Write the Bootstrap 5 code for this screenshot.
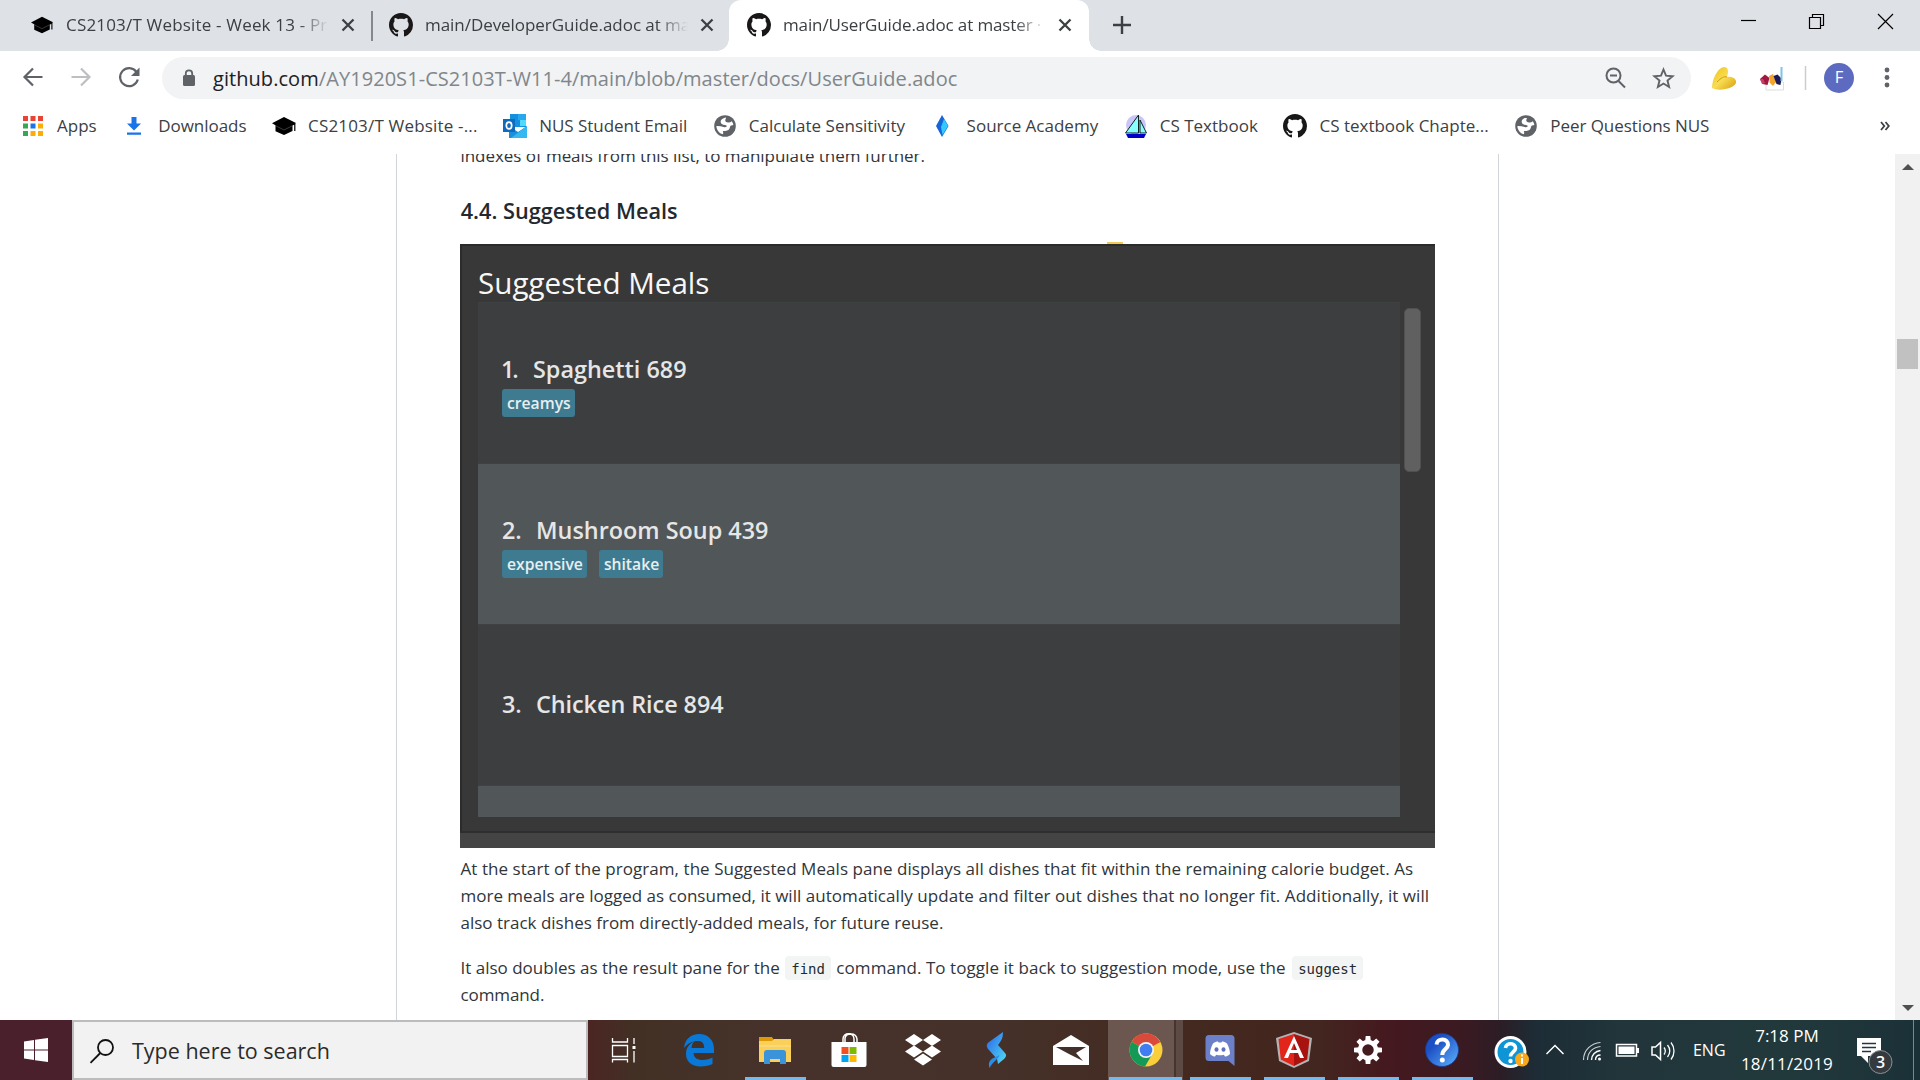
<!DOCTYPE html>
<html lang="en">
<head>
<meta charset="utf-8">
<title>main/UserGuide.adoc at master</title>
<link href="https://cdn.jsdelivr.net/npm/bootstrap@5.3.0/dist/css/bootstrap.min.css" rel="stylesheet">
<style>
body{width:1920px;height:1080px;overflow:hidden;font-family:"Open Sans","Noto Sans",sans-serif;font-size:17px;color:#3c4043;background:#fff}
svg{display:block;flex:none}
.fit{white-space:nowrap;flex:none}
.wide-1{letter-spacing:.06px}.wide-2{letter-spacing:.18px}
.tight-1{letter-spacing:-.05px}.tight-2{letter-spacing:-.12px}.tight-3{letter-spacing:-.1px}

/* tab strip */
.strip{height:51px;background:#dee1e6}
.tabitem{height:51px;padding-bottom:3px;padding-top:1px}
.t1{width:371px;padding-left:30px}
.t2{width:356px;padding-left:16px}
.t3{width:360px;padding-left:18px;background:#fff;border-radius:12px 12px 0 0;position:relative}
.t3:before,.t3:after{content:"";position:absolute;bottom:0;width:12px;height:12px}
.t3:before{left:-12px;background:radial-gradient(circle at 0 0,transparent 11.5px,#fff 12px)}
.t3:after{right:-12px;background:radial-gradient(circle at 100% 0,transparent 11.5px,#fff 12px)}
.tabname{width:263px;margin-left:12px;overflow:hidden;white-space:nowrap;-webkit-mask-image:linear-gradient(90deg,#000 88%,transparent 100%);mask-image:linear-gradient(90deg,#000 88%,transparent 100%)}
.tabclose{margin-left:12px}
.tabsep{width:2px;height:30px;margin-top:11px;background:#85888c}

/* address bar */
.toolbar{height:53px}
.omni{width:1529px;height:42px;margin-left:20px;border-radius:21px;background:#f1f3f4;padding-left:20px}
.url{font-size:20px;color:#80868b;margin-left:17px;padding-top:2px}
.url b{font-weight:400;color:#202124}
.avatar{width:30px;height:30px;background:#5c6bc0;font-size:16.5px;color:#fff}

/* bookmarks */
.marks{height:50px;padding:0 30px 6px 21px;gap:25.6px}
.marks>div{gap:12px}
.marks>div:not(:first-child){position:relative}

/* page */
.viewport{height:866px}
.scroller{width:25px;background:#f1f1f1;padding:10px 2px 9px}
.arrow-up,.arrow-down{border:6px solid transparent;width:0;height:0}
.arrow-up{border-bottom-color:#505050;border-top:0}
.arrow-down{border-top-color:#505050;border-bottom:0}
.thumb{width:21px;height:30px;background:#c1c1c1;margin-top:169px}
.doc{width:1103px;height:866px;margin-left:396px;border:solid #d1d5da;border-width:0 1px;padding:0 63px;color:#24292e;overflow:hidden}
.doc p{line-height:27px;margin-bottom:18px;color:#30353a;padding-left:.5px;white-space:nowrap}
.doc .cutline{margin:-12px 0 0}
.doc h3{font-size:21.7px;font-weight:600;line-height:28px;margin:28px 0 0;padding-left:.7px}
.shot{position:relative;width:975px;height:604px;margin-top:19px;background:#383838;border:solid #2b2b2b;border-width:2px 0 0 2px}
.crumb{position:absolute;left:645px;top:-4px;width:16px;height:2px;background:#f3c85a}
.shothead{height:56px;padding:15px 0 0 16px;font-size:29.6px;line-height:44px;color:#f7f7f7}
.meals{width:922px;margin-left:16px;height:515px;overflow:hidden}
.meal{height:161px;padding:50px 0 0 24px;background:#3c3e3f;font-size:23.4px;font-weight:600;color:#e6e6e6}
.meal.alt{background:#515658}
.meal{border-top:1px solid #3f4243}
.meal.plain{padding-top:63px}
.mealname{height:32px;line-height:32px}
.num{width:34px}
.num.first{width:31px;letter-spacing:-2px;text-indent:-1px}
.tags{gap:12px;margin-top:4px}
.taglab{height:28px;line-height:28.5px;background:#3e7b91;border-radius:3px;font-size:15.7px;padding:0 4px 0 5px;color:#e8eef0}
.shotbar{width:17px;height:164px;margin:6px 0 0 4px;border-radius:5px;background:#606060;border:1px solid #505050}
.shotfoot{height:17px;background:#444;border-top:2px solid #2e2e2e;margin-left:-2px}
.doc .after{margin-top:7px}
.cmd{display:inline-block;font:14px/24px "DejaVu Sans Mono",monospace;background:#f3f4f4;border-radius:4px;height:24px;padding:1px 6px 0;color:#24292e;margin:0 1px;vertical-align:0}
.cmd.long{margin-left:2px}

/* taskbar */
.taskbar{height:60px;background:linear-gradient(90deg,#4a202d 0,#4a202d 72px,#4b2522 588px,#423025 635px,#46322a 780px,#453129 1000px,#43291f 1190px,#43261f 1320px,#45191f 1385px,#3a1a22 1465px,#2c1d25 1500px,#1d2c36 1535px,#21353a 1620px,#22393c 1780px,#1b3138 1920px)}
.startbtn{width:72px}
.find{width:516px;background:#f2f2f2;border:2px solid #bcbcbc;padding:3px 0 0 15px;font-size:21.5px;color:#2b2b2b;gap:17px}
.app{width:74.1px;height:60px;position:relative}
.app.first{width:72px}
.app.edge{width:78px}
.app.run:after{content:"";position:absolute;left:7px;right:6px;bottom:0;height:3px;background:#76b9ed}
.app.on{background:linear-gradient(90deg,#6b5650 66px,#45352f 66px,#45352f 68px,#5e4a44 68px)}
.app.run.on:after{left:1px;right:1px}
.sys{color:#fff;font-size:17px}
.lang{font-size:16px;margin-left:12px;width:48px}
.clock{width:92px;line-height:28px}
.noti{margin-left:24px}
.peek{width:1px;background:#7c888c;margin-left:auto;margin-right:6px}
</style>
</head>
<body class="d-flex flex-column">
<svg width="0" height="0" style="display:none">
<symbol id="gh" viewBox="0 0 16 16"><path fill="#191717" d="M8 0C3.58 0 0 3.58 0 8c0 3.54 2.29 6.53 5.47 7.59.4.07.55-.17.55-.38 0-.19-.01-.82-.01-1.49-2.01.37-2.53-.49-2.69-.94-.09-.23-.48-.94-.82-1.13-.28-.15-.68-.52-.01-.53.63-.01 1.08.58 1.23.82.72 1.21 1.87.87 2.33.66.07-.52.28-.87.51-1.07-1.78-.2-3.64-.89-3.64-3.95 0-.87.31-1.59.82-2.15-.08-.2-.36-1.02.08-2.12 0 0 .67-.21 2.2.82.64-.18 1.32-.27 2-.27s1.36.09 2 .27c1.53-1.04 2.2-.82 2.2-.82.44 1.1.16 1.92.08 2.12.51.56.82 1.27.82 2.15 0 3.07-1.87 3.75-3.65 3.95.29.25.54.73.54 1.48 0 1.07-.01 1.93-.01 2.2 0 .21.15.46.55.38A8.01 8.01 0 0 0 16 8c0-4.42-3.58-8-8-8z"/></symbol>
<symbol id="cap" viewBox="0 0 24 24"><path d="M12 3 0 9.300l3.500 1.900v6L12 21l8.500-4v-5.400l1.700-.9V17h1.200V9.600L24 9z"/><path d="M3.500 11.700 12 16l8.500-4.300" fill="none" stroke="#777" stroke-width=".5"/></symbol>
<symbol id="cx" viewBox="0 0 14 14"><path d="M1.500 1.500l11 11M12.500 1.500l-11 11" stroke="#3c4043" stroke-width="2.300"/></symbol>
<symbol id="globe" viewBox="0 0 24 24"><circle cx="12" cy="12" r="10.800" fill="#5f6368"/><path fill="#fff" d="M13 3.400C9.500 4 7.300 6 7.700 8.200c.4 1.900 2.200 2.500 4.200 2.700 1.600.2 2.100.8 1.700 1.600-.5.800-1.800.8-3.100.5C8.300 12.400 6 11.800 3.400 12c.1 4 2.700 7.300 6.400 8.300.7-1.200.5-2.200 0-3.300 2.900.1 5.400-.3 6.600-2.300.8-1.400.4-2.700 1.700-3.300l2.300-.5c-.2-1.400-.8-2.600-1.600-3.600-1.300 1.100-3 1.400-4.700 1-1.400-.4-1.900-1.100-1.800-2.100.1-1.100.7-1.700.7-2.800z"/></symbol>
</svg>

<div class="strip d-flex">
  <div class="tabitem t1 d-flex align-items-center"><svg width="24" height="22"><use href="#cap"/></svg><div class="tabname"><span class="fit wide-2">CS2103/T Website - Week 13 - Pr</span></div><svg class="tabclose" width="14" height="14"><use href="#cx"/></svg></div>
  <div class="tabsep"></div>
  <div class="tabitem t2 d-flex align-items-center"><svg width="24" height="24"><use href="#gh"/></svg><div class="tabname"><span class="fit tight-1">main/DeveloperGuide.adoc at ma</span></div><svg class="tabclose" width="14" height="14"><use href="#cx"/></svg></div>
  <div class="tabitem t3 d-flex align-items-center"><svg width="24" height="24"><use href="#gh"/></svg><div class="tabname"><span class="fit tight-2">main/UserGuide.adoc at master ·</span></div><svg class="tabclose" width="14" height="14"><use href="#cx"/></svg></div>
  <svg width="831" height="51" viewBox="1089 0 831 51" fill="none" stroke="#3c4043"><path d="M1113 25h18M1122 16v18" stroke-width="2.400"/><g stroke="#000" stroke-width="1.200"><path d="M1741 20.500h15"/><path d="M1809.500 17.500h11v11h-11zM1812.500 17v-2.500h11v11h-3"/><path d="M1878 14l15 15M1893 14l-15 15"/></g></svg>
</div>

<div class="toolbar d-flex align-items-center">
  <svg width="142" height="53" viewBox="0 51 142 53" fill="none" stroke="#5f6368" stroke-width="2.200"><path d="M42.500 77H24.500M33 68.500L24.500 77l8.500 8.500"/><path stroke="#bdc0c3" d="M71.500 77h18M81 68.500l8.500 8.500-8.500 8.500"/><path d="M136.500 72a9 9 0 1 0 1.300 7.500"/><path fill="#5f6368" stroke="none" d="M139.500 67.500V76H131z"/></svg>
  <div class="omni d-flex align-items-center">
    <svg width="14" height="18" viewBox="0 0 14 18"><rect x="1" y="6" width="12" height="11" rx="1.500" fill="#5f6368"/><path d="M3.800 7V4.500a3.200 3.200 0 0 1 6.400 0V7" fill="none" stroke="#5f6368" stroke-width="1.800"/></svg>
    <div class="url flex-grow-1"><span class="fit wide-1"><b>github.com</b>/AY1920S1-CS2103T-W11-4/main/blob/master/docs/UserGuide.adoc</span></div>
    <svg width="96" height="42" viewBox="1595 57 96 42" fill="none" stroke="#5f6368" stroke-width="2"><circle cx="1613.500" cy="75.500" r="7"/><path d="M1610 75.500h7M1618.500 81l6.500 6.500"/><path stroke-width="1.900" d="M1663.500 69.500l2.500 6.200 6.600.5-5.100 4.300 1.600 6.500-5.600-3.500-5.600 3.500 1.600-6.500-5.100-4.300 6.600-.5z"/></svg>
  </div>
  <svg width="133" height="53" viewBox="1691 51 133 53"><defs><linearGradient id="gd" x1="0" y1="0" x2="1" y2="1"><stop offset="0" stop-color="#f0c419"/><stop offset=".5" stop-color="#f8dc55"/><stop offset="1" stop-color="#d79f08"/></linearGradient></defs><path fill="url(#gd)" d="M1712 88c0-8 5-20 12-21 4 0 5 4 3 10 5-1 10 2 9 6-2 5-16 9-24 5z"/><path d="M1717 82c4-4 7-6 10-5" stroke="#d09c0c" fill="none"/><path fill="#fff" stroke="#ddd" d="M1766 82h17.500v8H1766z"/><path fill="#a3163f" d="M1760 79l5-4.500 4.500 3.500-2 7-5-1z"/><path fill="#c9406a" d="M1760 79l3 0 2 4-3 1z"/><path fill="#f0a62c" d="M1769 76l4-2 3 8-3 4-3-3z"/><path fill="#1d1a55" d="M1773.500 76l4-1.500 4 4-1 6.500-4-1z"/><path stroke="#7cc4e8" stroke-width="2" d="M1781.500 67v14"/><path stroke="#ccc" stroke-width="1.500" d="M1805.500 66v24"/></svg>
  <div class="avatar rounded-circle d-flex align-items-center justify-content-center">F</div>
  <svg class="ms-auto" width="66" height="53" viewBox="1854 51 66 53" fill="#5f6368"><circle cx="1887" cy="70" r="2.400"/><circle cx="1887" cy="77.500" r="2.400"/><circle cx="1887" cy="85" r="2.400"/></svg>
</div>

<div class="marks d-flex align-items-center">
  <div class="d-flex align-items-center"><svg width="24" height="24" viewBox="21 113 24 24"><path fill="#ea4335" d="M23 115h5v5h-5zM30.500 115h5v5h-5zM38 115h5v5h-5z"/><path fill="#34a853" d="M23 122.500h5v5h-5zM23 130h5v5h-5z"/><path fill="#1a73e8" d="M30.500 122.500h5v5h-5z"/><path fill="#fbad05" d="M38 122.500h5v5h-5zM30.500 130h5v5h-5zM38 130h5v5h-5z"/></svg><span class="fit">Apps</span></div>
  <div class="d-flex align-items-center"><svg width="24" height="24" viewBox="0 0 24 24"><path fill="#1a73e8" d="M9.500 3h5v6.500h4.500l-7 7-7-7h4.500zM5 18.500h14v2.300H5z"/></svg><span class="fit tight-1">Downloads</span></div>
  <div class="d-flex align-items-center"><svg width="24" height="24"><use href="#cap"/></svg><span class="fit wide-2">CS2103/T Website -...</span></div>
  <div class="d-flex align-items-center"><svg width="24" height="24" viewBox="0 0 24 24"><path fill="#1490df" d="M7 0h16v13H7z"/><path fill="#0a5ea8" d="M7 6h5v7H7z"/><path fill="#28a8ea" d="M15 0h8v6h-8z"/><path fill="#50d9ff" d="M17 6h6v6h-6z"/><path fill="#1a8fdc" d="M6 12l9 6 9-6v12H6z"/><path fill="#35b8f1" d="M24 12v12H8z"/><path fill="#0f6cbd" d="M0 5h12v13H0z"/><ellipse cx="6" cy="11.500" rx="2.700" ry="3.400" fill="none" stroke="#fff" stroke-width="1.700"/></svg><span class="fit tight-1">NUS Student Email</span></div>
  <div class="d-flex align-items-center"><svg width="24" height="24"><use href="#globe"/></svg><span class="fit">Calculate Sensitivity</span></div>
  <div class="d-flex align-items-center"><svg width="24" height="24" viewBox="0 0 24 24"><path fill="#1565d8" d="M11 1l6.500 11L11 23 5 12z"/><path fill="#35c8ff" d="M13 5l4 7-5.500 9-1.500-8z"/></svg><span class="fit">Source Academy</span></div>
  <div class="d-flex align-items-center"><svg width="24" height="24" viewBox="0 0 24 24"><circle cx="12" cy="11" r="10" fill="#c9c6f7"/><path fill="#8ff" stroke="#122" d="M14.500 1v18H1.500zM16 6l6.500 13H16z"/><path fill="#00c" d="M2 20h20l-2 4H4z"/></svg><span class="fit">CS Textbook</span></div>
  <div class="d-flex align-items-center"><svg width="24" height="24"><use href="#gh"/></svg><span class="fit">CS textbook Chapte...</span></div>
  <div class="d-flex align-items-center"><svg width="24" height="24"><use href="#globe"/></svg><span class="fit tight-1">Peer Questions NUS</span></div>
  <svg class="ms-auto" width="10" height="10" viewBox="0 0 10 10" fill="none" stroke="#3c4043" stroke-width="1.800"><path d="M1 1l3.300 4L1 9M5.500 1l3.300 4-3.300 4"/></svg>
</div>

<div class="viewport d-flex">
  <div class="flex-grow-1">
    <div class="doc">
      <p class="cutline"><span class="fit tight-1">indexes of meals from this list, to manipulate them further.</span></p>
      <h3><span class="fit">4.4. Suggested Meals</span></h3>
      <div class="shot d-flex flex-column">
        <div class="crumb"></div>
        <div class="shothead"><span class="fit">Suggested Meals</span></div>
        <div class="d-flex"><div class="meals">
          <div class="meal"><div class="mealname d-flex"><span class="num first">1.</span><span class="fit">Spaghetti 689</span></div><div class="tags d-flex"><div class="taglab">creamys</div></div></div>
          <div class="meal alt"><div class="mealname d-flex"><span class="num">2.</span><span class="fit">Mushroom Soup 439</span></div><div class="tags d-flex"><div class="taglab">expensive</div><div class="taglab">shitake</div></div></div>
          <div class="meal plain"><div class="mealname d-flex"><span class="num">3.</span><span class="fit tight-1">Chicken Rice 894</span></div></div>
          <div class="meal alt"></div>
        </div><div class="shotbar"></div></div>
        <div class="shotfoot mt-auto"></div>
      </div>
      <p class="after"><span class="fit wide-1">At the start of the program, the Suggested Meals pane displays all dishes that fit within the remaining calorie budget. As</span><br><span class="fit">more meals are logged as consumed, it will</span><span class="fit wide-1"> automatically update and filter out dishes that no longer fit. Additionally, it will</span><br><span class="fit">also track dishes from directly-added meals, for future reuse.</span></p>
      <p><span class="fit">It also doubles as the result pane for the</span> <code class="cmd">find</code> <span class="fit wide-1">command. To toggle it back to suggestion mode, use the</span> <code class="cmd long">suggest</code><br><span class="fit tight-3">command.</span></p>
    </div>
  </div>
  <div class="scroller d-flex flex-column align-items-center"><div class="arrow-up"></div><div class="thumb"></div><div class="arrow-down mt-auto"></div></div>
</div>

<div class="taskbar d-flex">
  <div class="startbtn d-flex align-items-center justify-content-center"><svg width="24" height="24" viewBox="0 0 24 24" fill="#fff"><path d="M0 3.400l10-1.400v9.500H0zM11 1.800L24 0v11.500H11zM0 12.500h10V22L0 20.600zM11 12.500h13V24l-13-1.800z"/></svg></div>
  <div class="find d-flex align-items-center"><svg width="26" height="26" viewBox="0 0 26 26" fill="none" stroke="#111" stroke-width="1.800"><circle cx="16.500" cy="8.500" r="7.500"/><path d="M11.300 14L1.500 23.800"/></svg><span class="fit">Type here to search</span></div>
  <div class="app first d-flex align-items-center justify-content-center"><svg width="26" height="26" viewBox="0 0 26 26" fill="none" stroke="#fff" stroke-width="1.300"><path d="M1.500 1v4h15V1M1.500 8.500h15v11h-15zM1.500 25.500v-3h15v3M23 1v6M23 14v11.500"/><path fill="#fff" stroke="none" d="M21.500 9h3v3h-3z"/></svg></div>
  <div class="app edge d-flex align-items-center justify-content-center"><svg width="34" height="34" viewBox="0 0 34 34"><path fill="#0a78d7" d="M2 15C3 6 9 1 17 1c9 0 15 6 15 15v4H11.500c.5 5 4 7 9 7 4 0 7-1 10-2.500V31c-3 1.500-7 2.500-12 2.500-9 0-14.500-5-14.500-12.500 0-6 3-10 8-12.500-1.500 1.800-2.300 4-2.500 6.500h12.700c0-4.500-2-7-6.200-7C10.500 8 5.500 10.500 2 15z"/></svg></div>
  <div class="app run d-flex align-items-center justify-content-center"><svg width="34" height="30" viewBox="0 0 34 30"><path fill="#dc9a0a" d="M1 2h13l2 3-2 2H1z"/><path fill="#fbd05a" d="M1 6h13l2-2h17v23H1z"/><path fill="#fde08a" d="M1 10h32v2H1z" opacity=".5"/><path fill="#3b93d9" d="M6 29V18a3 3 0 0 1 3-3h16a3 3 0 0 1 3 3v11h-6v-5H12v5z"/></svg></div>
  <div class="app d-flex align-items-center justify-content-center"><svg width="36" height="36" viewBox="0 0 36 36"><path fill="none" stroke="#fff" stroke-width="1.500" d="M12 11V7c0-7 11-7 11 0v4M14 11V6c1-5 11-6 12 1v4"/><path fill="#fff" d="M.5 10h35v23a2 2 0 0 1-2 2H2.500a2 2 0 0 1-2-2z"/><path fill="#f25022" d="M10.500 15h7v7h-7z"/><path fill="#7fba00" d="M18.500 15h7v7h-7z"/><path fill="#00a4ef" d="M10.500 23h7v7h-7z"/><path fill="#ffb900" d="M18.500 23h7v7h-7z"/></svg></div>
  <div class="app d-flex align-items-center justify-content-center"><svg width="36" height="34" viewBox="0 0 36 34" fill="#fff"><path d="M9 1l9 6-9 6-9-6zM27 1l9 6-9 6-9-6zM9 12.500l9 6-9 6-9-6zM27 12.500l9 6-9 6-9-6zM18 20.500l9 6-9 6-9-6z"/></svg></div>
  <div class="app d-flex align-items-center justify-content-center"><svg width="24" height="36" viewBox="0 0 24 36"><defs><linearGradient id="sl" x1="0" y1="0" x2="1" y2="1"><stop offset="0" stop-color="#2a62e8"/><stop offset="1" stop-color="#4fe0f5"/></linearGradient></defs><path fill="url(#sl)" d="M18 0c0 5-1 8-5 13l7 8c2 2 1 4-1 6l-6 5-1-5-8-9c-3-3-3-6 0-8z"/><path fill="#2b8dea" d="M4.500 36c-1.500-5 0-8 4-10l6-3c-1 4-6 6-10 13z"/></svg></div>
  <div class="app d-flex align-items-center justify-content-center"><svg width="36" height="30" viewBox="0 0 36 30"><path fill="#fff" d="M0 11L18 0l18 11v19H0z"/><path fill="#43302a" d="M3 12h30l-10 6 7 8L16 19z"/></svg></div>
  <div class="app run on d-flex align-items-center justify-content-center"><svg width="34" height="34" viewBox="0 0 34 34"><circle cx="17" cy="17" r="16.500" fill="#fbce3c"/><path fill="#d94a3d" d="M17 17L2.700 8.700A16.500 16.500 0 0 1 31.300 9z"/><path fill="#d94a3d" d="M17 9h14.300L17 12z"/><path fill="#149a56" d="M2.700 8.700A16.500 16.500 0 0 0 16 33.500l7.500-12.700L17 17z"/><circle cx="17" cy="17" r="8" fill="#f4f4f4"/><circle cx="17" cy="17" r="6.300" fill="#3f7df0"/></svg></div>
  <div class="app run d-flex align-items-center justify-content-center"><svg width="30" height="32" viewBox="0 0 30 32"><path fill="#6b80c8" d="M4 1h22a3.500 3.500 0 0 1 3.500 3.500V32l-6-5H4A3.500 3.500 0 0 1 .5 23.500v-19A3.500 3.500 0 0 1 4 1z"/><path fill="#fff" d="M8 9.500c2-1.500 3.500-2 5-2l.5 1h3l.5-1c1.500 0 3 .5 5 2 2 4 3 7 3 10.500-2 2-4 2.500-5 2.500l-1.200-1.800c-2.500.7-5 .7-7.600 0L10 22.500c-1 0-3-.5-5-2.500 0-3.500 1-6.500 3-10.500z"/><ellipse cx="11.500" cy="15.500" rx="2" ry="2.300" fill="#5c70bd"/><ellipse cx="18.500" cy="15.500" rx="2" ry="2.300" fill="#5c70bd"/></svg></div>
  <div class="app run d-flex align-items-center justify-content-center"><svg width="36" height="36" viewBox="0 0 36 36"><path fill="#b3b3b3" d="M18 0l18 6-3 23-15 7-15-7L0 6z"/><path fill="#e1251b" d="M18 2L2.500 7l2.300 20.500L18 34z"/><path fill="#a8120f" d="M18 2l15.500 5-2.300 20.500L18 34z"/><path fill="#fff" fill-rule="evenodd" d="M18 4l10 22h-4l-2-5h-8l-2 5H8zm0 7l-3 7h6z"/></svg></div>
  <div class="app run d-flex align-items-center justify-content-center"><svg width="28" height="28" viewBox="-14 -14 28 28"><circle r="8" fill="none" stroke="#fff" stroke-width="4.500"/><g fill="#fff"><path id="tooth" d="M-2.800-9l.5-5h4.600l.5 5z"/><use href="#tooth" transform="rotate(45)"/><use href="#tooth" transform="rotate(90)"/><use href="#tooth" transform="rotate(135)"/><use href="#tooth" transform="rotate(180)"/><use href="#tooth" transform="rotate(225)"/><use href="#tooth" transform="rotate(270)"/><use href="#tooth" transform="rotate(315)"/></g></svg></div>
  <div class="app run d-flex align-items-center justify-content-center"><svg width="34" height="34" viewBox="0 0 34 34"><defs><linearGradient id="hb" x1="0" y1="0" x2="1" y2="1"><stop offset=".3" stop-color="#1c4fc4"/><stop offset="1" stop-color="#5fb4ff"/></linearGradient></defs><circle cx="17" cy="17" r="16.500" fill="url(#hb)" stroke="#163f9c" stroke-width=".8"/><path fill="none" stroke="#fff" stroke-width="4" d="M11.500 11.500c.5-7 12-6.500 11.500.5-.3 4-5.700 4.500-5.700 10"/><circle cx="17.300" cy="27" r="2.500" fill="#fff"/></svg></div>
  <div class="sys d-flex align-items-center flex-grow-1">
    <svg width="202" height="60" viewBox="1480 1020 202 60" fill="none" stroke="#fff" stroke-width="1.500"><circle cx="1511.500" cy="1052" r="14.500" fill="#0e95d6" stroke-width="3"/><path stroke-width="3.600" d="M1506.500 1048c.5-6 10.500-5.500 10 .5-.3 3.500-5 4-5 8"/><circle cx="1511.500" cy="1061" r="2.200" fill="#fff" stroke="none"/><circle cx="1523" cy="1059.500" r="7" fill="#f7a81b" stroke="none"/><path stroke-width="2" d="M1523 1058v6M1523 1054.500v2"/>
      <path d="M1547.500 1054l8.500-8.500 8.500 8.500"/>
      <path stroke-width="1.200" stroke="#c8cfd1" d="M1584.500 1060c0-10 8-17 17-17.500M1588.500 1060c0-8 6-13 13-13.500"/><path stroke-width="1.400" d="M1592.500 1060c0-5 4-9 9-9.500M1596.500 1060c0-3 2-5 5-5"/><circle cx="1600.500" cy="1059" r="1.500" fill="#fff" stroke="none"/>
      <path d="M1617.500 1044.500h20v11.500h-20z"/><path fill="#fff" stroke="none" d="M1619.500 1046.500h16v7.500h-16zM1638 1048h2v5h-2z"/>
      <path d="M1653 1047h3.500l5-4.500v17l-5-4.500h-3.500z"/><path stroke-width="1.300" d="M1665 1047.500c1.500 2 1.500 5 0 7M1668.500 1045c3 3.500 3 8.500 0 12M1672 1042.500c4 5 4 12 0 17"/></svg>
    <span class="lang">ENG</span>
    <div class="clock text-center"><div>7:18 PM</div><div class="fit wide-2">18/11/2019</div></div>
    <svg class="noti" width="38" height="60" viewBox="1858 1020 38 60"><path fill="#fff" d="M1858 1038h24v18h-13v7l-7-7h-4z"/><path stroke="#22383c" stroke-width="1.300" d="M1863 1043.500h14M1863 1047.500h14M1863 1051.500h9"/><circle cx="1881.500" cy="1062" r="11.500" fill="#343a3e" stroke="#8a9093"/><text x="1881.500" y="1068" text-anchor="middle" font-size="16" font-weight="600" fill="#fff">3</text></svg>
    <div class="peek align-self-stretch"></div>
  </div>
</div>
<script src="https://cdn.jsdelivr.net/npm/bootstrap@5.3.0/dist/js/bootstrap.bundle.min.js"></script>
</body>
</html>
